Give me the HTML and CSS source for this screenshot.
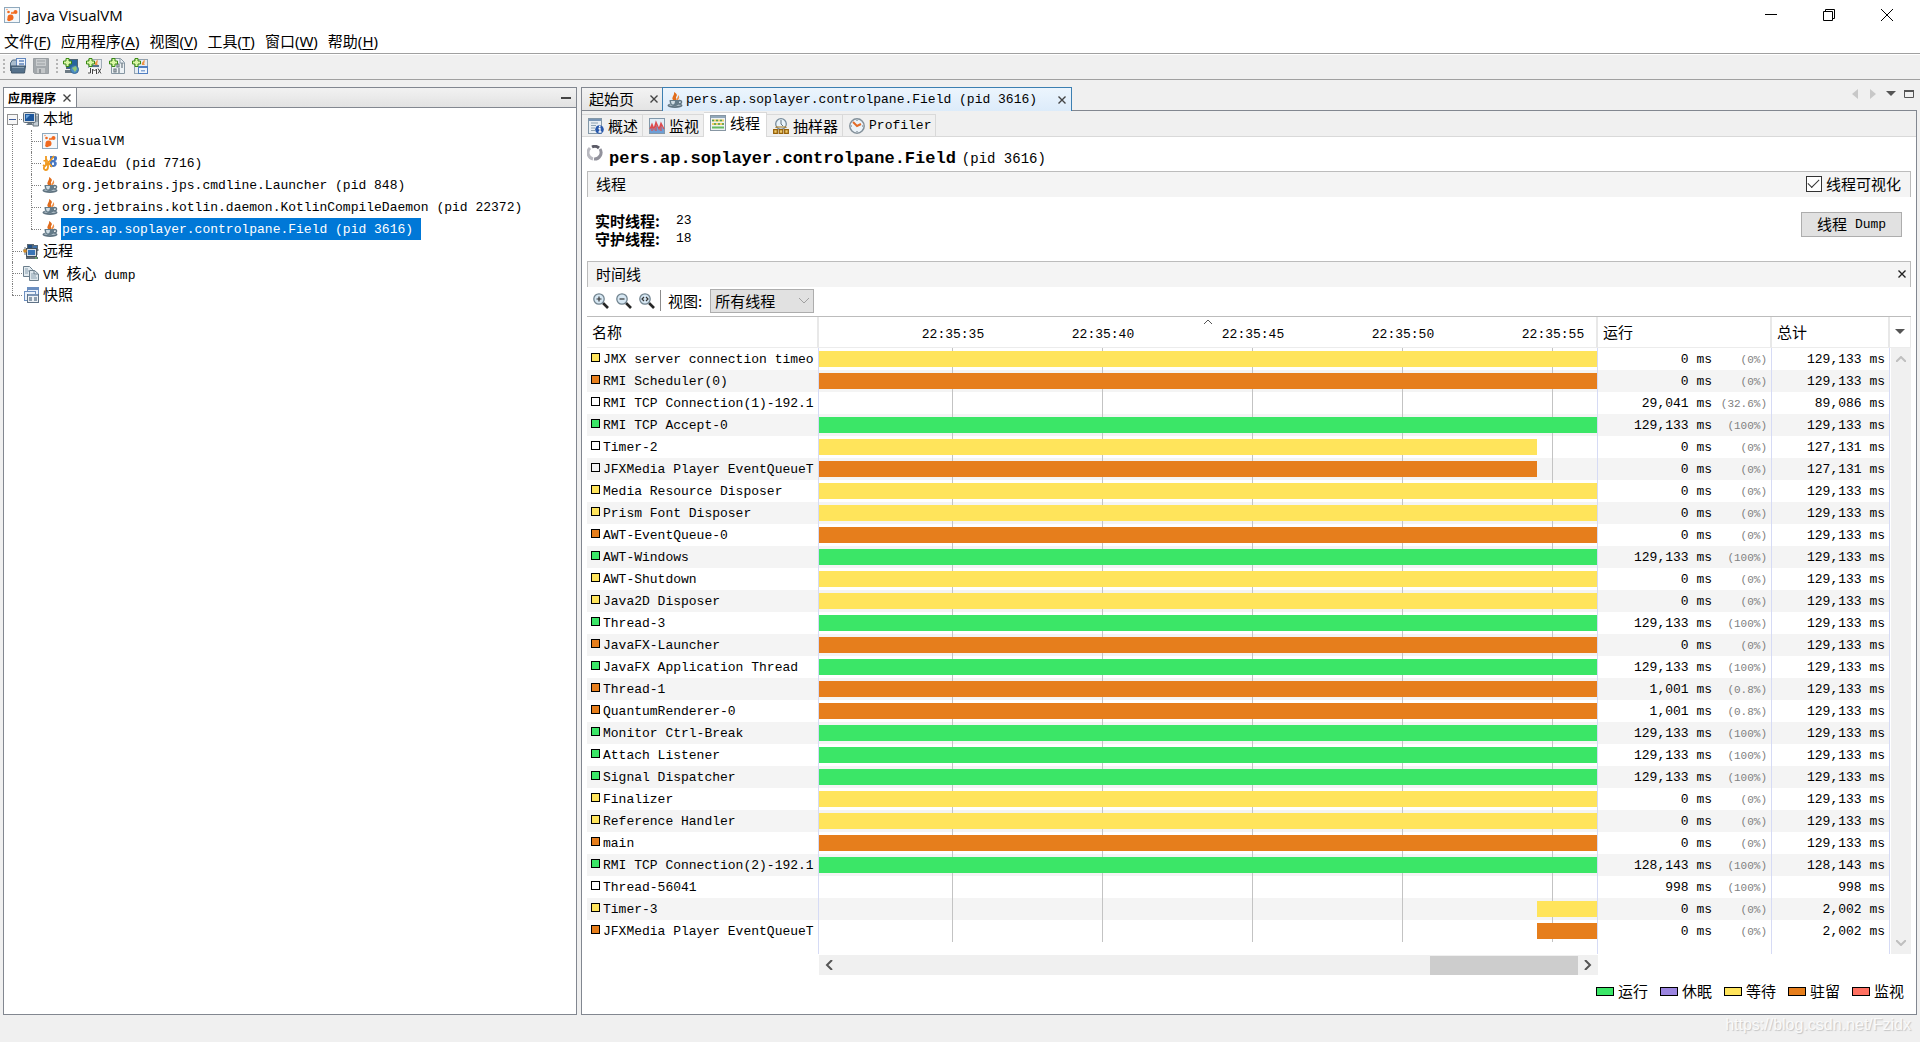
FILE: index.html
```html
<!DOCTYPE html>
<html lang="zh-CN">
<head>
<meta charset="utf-8">
<title>Java VisualVM</title>
<link rel="stylesheet" href="styles.css">
</head>
<body>
<svg class="defs" aria-hidden="true">
  <symbol id="i-vm" viewBox="0 0 16 16"><rect x=".5" y=".5" width="15" height="15" fill="#f4f8fb" stroke="#8fa9bd"/><path d="M9 6.500L11 4.500" stroke="#f06a20" stroke-width="1.500"/><circle cx="6.500" cy="10.500" r="3" fill="#f06a20"/><circle cx="5" cy="12.500" r="1.800" fill="#f06a20"/><circle cx="11.500" cy="5" r="2" fill="#f06a20"/><circle cx="4.500" cy="5" r="1.300" fill="#f06a20"/><circle cx="8" cy="6" r="1.200" fill="#f7853f"/><circle cx="3" cy="2.500" r=".8" fill="#f7a070"/></symbol>
  <symbol id="i-java" viewBox="0 0 16 16"><path d="M7.500 9C2.500 6 8 4 7 0c5 3 2 4 2 5.500S10 8 7.500 9z" fill="#e06c1c"/><path d="M9.500 9c-1-3 2-3 1.500-6 3 3-.5 4 0 6z" fill="#ee9048"/><ellipse cx="8" cy="13.500" rx="7.500" ry="2.400" fill="#5f7380"/><ellipse cx="8" cy="13" rx="6" ry="1.200" fill="#b9c7d0"/><path d="M2.500 8h10c0 4.500-2 6-5 6s-5-2-5-6z" fill="#647b89"/><path d="M4 9h4c0 2.500-1 3.500-2 3.500S4 11.500 4 9z" fill="#cfdce3"/><path d="M12 8.500c3.500-.5 3.500 3.500-.5 3.500" fill="none" stroke="#5f7380" stroke-width="1.400"/></symbol>
  <symbol id="i-idea" viewBox="0 0 16 16"><path d="M8 1h5q2.500 0 2 3-.5 2-2 2 2.500 1 1.500 4-1 2-3 2H8z" fill="#4777c2"/><path d="M10 3h2v2h-2zM10 7.500h2V10h-2z" fill="#eaf1fb"/><path d="M1.500 6l4-1M4 1v8q0 3-3 1M12 1L7 7l-5 5c-1 4 4 4 4 0V7l4 5" fill="none" stroke="#f09a20" stroke-width="1.800"/></symbol>
  <symbol id="i-local" viewBox="0 0 16 16"><path d="M11 3h4.500v12H10z" fill="#c4cdd4" stroke="#68757f"/><path d="M12 6h3M12 8h3M12 10h3" stroke="#7b8790"/><rect x=".5" y="1.500" width="12" height="10" rx="1" fill="#d6dce1" stroke="#5d6b77"/><rect x="2" y="3" width="9" height="7" fill="#1d579d"/><path d="M3 4h4L3 8z" fill="#6aa4dc"/><path d="M5 12h4l1 2H3z" fill="#6d7983"/></symbol>
  <symbol id="i-remote" viewBox="0 0 16 16"><path d="M0 7h16M2 4v8M14 4v8" stroke="#6b7680"/><rect x="4.500" y="1.500" width="6" height="5" fill="#234f83" stroke="#5b6873"/><rect x="9.500" y="2.500" width="5" height="5" fill="#3d72ad" stroke="#5b6873"/><rect x="4.500" y="6.500" width="8" height="6" fill="#3975b7" stroke="#d5dce2"/><rect x="3.500" y="5.500" width="10" height="8" fill="none" stroke="#44515c"/><path d="M3 14h12v2H3z" fill="#606b74"/><circle cx="2" cy="8" r="1.800" fill="#d28b25"/><path d="M12 15h2" stroke="#75d35a"/></symbol>
  <symbol id="i-dump" viewBox="0 0 16 16"><path d="M.5 1.500h6l3 3v7h-9z" fill="#e3ebf0" stroke="#6b7e8c"/><path d="M6.500 5.500h5l4 3.500v6.500h-9z" fill="#dde6ec" stroke="#6b7e8c"/><path d="M2 4h3M2 6h4M2 8h3M8 9h3M8 11h5M8 13h6" stroke="#8ca1b0"/><path d="M11 5v4h4" fill="none" stroke="#6b7e8c"/></symbol>
  <symbol id="i-snap" viewBox="0 0 16 16"><rect x="4.500" y=".5" width="11" height="9" fill="#eaf1fa" stroke="#6c8fc0"/><path d="M4 2h12" stroke="#6c8fc0" stroke-width="2"/><rect x="1.500" y="4.500" width="11" height="9" fill="#eaf1fa" stroke="#6c8fc0"/><rect x="4.500" y="7.500" width="11" height="8" fill="#edf1f5" stroke="#5f7286"/><path d="M5 8h10" stroke="#7b95b5" stroke-width="2"/><path d="M6 11h3M6 13h3M11 11h3M11 13h3" stroke="#6d8396" stroke-width="1.500"/></symbol>
  <symbol id="i-open" viewBox="0 0 16 16"><path d="M.5 13V5l2-3h4v6" fill="#a9bccd" stroke="#506a82"/><rect x="6.500" y=".5" width="9" height="8" fill="#eef3fa" stroke="#6287bd"/><path d="M9 3h5M9 6h5" stroke="#6287bd" stroke-width="1.500"/><path d="M1 8h14.500l-1 7h-13z" fill="#55718b" stroke="#40566a"/><path d="M2 9.500h12" stroke="#89a0b4"/></symbol>
  <symbol id="i-save" viewBox="0 0 16 16"><path d="M.5 .5h15v15h-14l-1-1z" fill="#a3a8ac" stroke="#9a9fa3"/><path d="M3 1h10v7H3z" fill="#c9ccce"/><path d="M4 3h8M4 6h8" stroke="#999ea2"/><path d="M4 10h8v5H4z" fill="#c3c6c8"/><path d="M6 11h2v4H6z" fill="#92979b"/></symbol>
  <symbol id="i-plus" viewBox="0 0 16 16"><path d="M3 .5h3V3h2.500v3H6v2.500H3V6H.5V3H3z" fill="#dcf7a8" stroke="#398b13"/></symbol>
  <symbol id="i-addhost" viewBox="0 0 16 16"><rect x="3.500" y="1.500" width="11" height="9" fill="#28649e" stroke="#526673"/><path d="M2 12h7v3H2z" fill="#6d7b85"/><circle cx="11.500" cy="11.500" r="4" fill="#4d8ec4" stroke="#386a96"/><path d="M9 10l4-2 1 3-2 3z" fill="#91c676"/><use href="#i-plus"/></symbol>
  <symbol id="i-addjmx" viewBox="0 0 16 16"><rect x="2.500" y="1.500" width="13" height="14" fill="#e6ebef" stroke="#a0acb6"/><path d="M9 7c-1-3 2-3 2-6 2 3-1 4 1 6" fill="#f09345"/><path d="M6 8h7" stroke="#58738a" stroke-width="2"/><path d="M2 10h14v6H2z" fill="#f8f8f8"/><path d="M4.500 10v5H2M6.500 16v-5l2 2 2-2v5M12 10.500l3 5M15 10.500l-3 5" fill="none" stroke="#444"/><use href="#i-plus"/></symbol>
  <symbol id="i-addcore" viewBox="0 0 16 16"><path d="M2.500 .5h9l4 4v11h-13z" fill="#edf2f5" stroke="#8696a2"/><path d="M11 1v4h4" fill="none" stroke="#8696a2"/><path d="M8 6h2v3H8zM13 5v5M5 11h2v3H5zM10 10v5" fill="none" stroke="#6b7780" stroke-width="1.200"/><use href="#i-plus"/></symbol>
  <symbol id="i-addsnap" viewBox="0 0 16 16"><rect x="2.500" y="1.500" width="13" height="14" fill="#e6edf3" stroke="#91a3b3"/><path d="M10 7c-1-3 2-3 2-6 2 3-1 4 1 6" fill="#f09345"/><rect x="6.500" y="8.500" width="9" height="7" fill="#eff5fc" stroke="#517fc1"/><path d="M7 9.500h8" stroke="#517fc1"/><path d="M9 12h4v1.500H9z" fill="#86a7d5"/><use href="#i-plus"/></symbol>
  <symbol id="i-overview" viewBox="0 0 16 16"><rect x=".5" y=".5" width="13" height="15" fill="#e9eff4" stroke="#8498a8"/><path d="M1 2h12" stroke="#7795b5" stroke-width="2"/><path d="M3 5h7M3 7.500h5M3 10h4M3 12.500h4" stroke="#8ea3b3"/><circle cx="11.500" cy="11.500" r="4.300" fill="#2858ac"/><path d="M10.500 10.500h1.500v3.500M10.500 14h3M11 8.500h1.500" fill="none" stroke="#fff" stroke-width="1.300"/></symbol>
  <symbol id="i-monitor" viewBox="0 0 16 16"><rect x=".5" y=".5" width="15" height="15" fill="#e1edf7" stroke="#8298aa"/><path d="M1 15v-4l2-3 2 3 3-4 2 4 2-4 3 4v4z" fill="#6d9fd6"/><path d="M1 11l2-5 2 5 2-7 3 7 2-6 3 6M3 7v6M7 6v7M12 7v6" fill="none" stroke="#dd4a4e" stroke-width="1.200"/></symbol>
  <symbol id="i-threads" viewBox="0 0 16 16"><rect x=".5" y=".5" width="15" height="15" fill="#eef2f5" stroke="#8796a3"/><path d="M1 2h14" stroke="#92a8ba" stroke-width="2"/><path d="M2 5.500h12" stroke="#f0ce61" stroke-width="2"/><path d="M2 9h12" stroke="#f0ce61" stroke-width="2"/><path d="M2 12.500h12" stroke="#66bb61" stroke-width="2"/><path d="M2 5.500h2M6 5.500h2M10 5.500h2M4 9h2M8 9h2M12 9h2" stroke="#4c9d55" stroke-width="1.500"/></symbol>
  <symbol id="i-sampler" viewBox="0 0 16 16"><circle cx="8" cy="6" r="5.300" fill="#e9f3fa" stroke="#788c9c" stroke-width="1.300"/><path d="M8 2v4l2 2" fill="none" stroke="#617380"/><path d="M3 10v-1h10v1" fill="none" stroke="#a77519"/><path d="M.7 11.700h3.600v3.600H.7zM6.200 11.700h3.600v3.600H6.200zM11.700 11.700h3.600v3.600h-3.600z" fill="#f0ca67" stroke="#956008" stroke-width="1.300"/></symbol>
  <symbol id="i-clock" viewBox="0 0 16 16"><circle cx="8" cy="8" r="7.200" fill="#ebf3f9" stroke="#83909a" stroke-width="1.500"/><path d="M8 2v1M8 13v1M2 8h1M13 8h1" stroke="#65737e"/><path d="M4 4l4 4 4-2" fill="none" stroke="#e36b27" stroke-width="2"/></symbol>
  <symbol id="i-lens" viewBox="0 0 16 16"><path d="M10 10l5 5" stroke="#262626" stroke-width="2.600"/><circle cx="6" cy="6" r="5.200" fill="#d6e7f3" stroke="#71838f" stroke-width="1.300"/></symbol>
  <symbol id="i-x" viewBox="0 0 10 10"><path d="M1.500 1.500l7 7M8.500 1.500l-7 7" stroke="currentColor" stroke-width="1.400"/></symbol>
</svg>

<header class="titlebar">
  <svg class="icon"><use href="#i-vm"/></svg>
  <h1 class="app-title">Java VisualVM</h1>
  <div class="window-buttons">
    <button aria-label="最小化"><svg width="12" height="12"><path d="M0 5.500h12" stroke="#000"/></svg></button>
    <button aria-label="还原"><svg width="12" height="12" fill="none" stroke="#000"><path d="M.5 2.500h9v9h-9zM2.500 2V.5h9v9H10"/></svg></button>
    <button aria-label="关闭"><svg width="12" height="12"><path d="M0 0l12 12M12 0L0 12" stroke="#000"/></svg></button>
  </div>
</header>
<nav class="menubar">
  <button>文件(<u>F</u>)</button><button>应用程序(<u>A</u>)</button><button>视图(<u>V</u>)</button><button>工具(<u>T</u>)</button><button>窗口(<u>W</u>)</button><button>帮助(<u>H</u>)</button>
</nav>
<div class="toolbar">
  <i class="grip"></i>
  <button aria-label="装入"><svg class="icon"><use href="#i-open"/></svg></button>
  <button aria-label="另存为" disabled><svg class="icon"><use href="#i-save"/></svg></button>
  <i class="grip"></i>
  <button aria-label="添加远程主机"><svg class="icon"><use href="#i-addhost"/></svg></button>
  <button aria-label="添加 JMX 连接"><svg class="icon"><use href="#i-addjmx"/></svg></button>
  <button aria-label="添加 VM 核心 dump"><svg class="icon"><use href="#i-addcore"/></svg></button>
  <button aria-label="添加快照"><svg class="icon"><use href="#i-addsnap"/></svg></button>
</div>

<main class="workspace">
  <aside class="explorer">
    <div class="explorer-head">
      <div class="explorer-tab">应用程序 <button aria-label="关闭"><svg class="x"><use href="#i-x"/></svg></button></div>
      <button class="minimize" aria-label="最小化"></button>
    </div>
    <ul class="tree">
      <li><button class="expander" aria-label="折叠"></button>
        <div class="node"><svg class="icon"><use href="#i-local"/></svg><span class="label cjk">本地</span></div>
        <ul>
          <li><div class="node"><svg class="icon"><use href="#i-vm"/></svg><span class="label">VisualVM</span></div></li>
          <li><div class="node"><svg class="icon"><use href="#i-idea"/></svg><span class="label">IdeaEdu (pid 7716)</span></div></li>
          <li><div class="node"><svg class="icon"><use href="#i-java"/></svg><span class="label">org.jetbrains.jps.cmdline.Launcher (pid 848)</span></div></li>
          <li><div class="node"><svg class="icon"><use href="#i-java"/></svg><span class="label">org.jetbrains.kotlin.daemon.KotlinCompileDaemon (pid 22372)</span></div></li>
          <li><div class="node"><svg class="icon"><use href="#i-java"/></svg><span class="label selected">pers.ap.soplayer.controlpane.Field (pid 3616)</span></div></li>
        </ul>
      </li>
      <li><div class="node"><svg class="icon"><use href="#i-remote"/></svg><span class="label cjk">远程</span></div></li>
      <li><div class="node"><svg class="icon"><use href="#i-dump"/></svg><span class="label">VM <span class="cjk">核心</span> dump</span></div></li>
      <li><div class="node"><svg class="icon"><use href="#i-snap"/></svg><span class="label cjk">快照</span></div></li>
    </ul>
  </aside>

  <section class="editor">
    <div class="doc-tabs">
      <div class="doc-tab start"><span class="cjk">起始页</span><button aria-label="关闭"><svg class="x"><use href="#i-x"/></svg></button></div>
      <div class="doc-tab active"><svg class="icon"><use href="#i-java"/></svg><span>pers.ap.soplayer.controlpane.Field (pid 3616)</span><button aria-label="关闭"><svg class="x"><use href="#i-x"/></svg></button></div>
      <div class="doc-controls">
        <button aria-label="向左滚动" disabled><svg width="10" height="10"><path d="M8 0v10L2 5z" fill="#c8c8c8"/></svg></button>
        <button aria-label="向右滚动" disabled><svg width="10" height="10"><path d="M2 0v10l6-5z" fill="#c8c8c8"/></svg></button>
        <button aria-label="文档列表"><svg width="10" height="10"><path d="M0 2h10L5 7z" fill="#555"/></svg></button>
        <button aria-label="最大化"><svg width="10" height="10"><path d="M.5 1.500h9v7h-9z" fill="none" stroke="#555"/><path d="M0 2h10" stroke="#555" stroke-width="2"/></svg></button>
      </div>
    </div>
    <div class="doc">
      <div class="view-tabs">
        <button class="cjk"><svg class="icon"><use href="#i-overview"/></svg>概述</button>
        <button class="cjk"><svg class="icon"><use href="#i-monitor"/></svg>监视</button>
        <button class="cjk current"><svg class="icon"><use href="#i-threads"/></svg>线程</button>
        <button class="cjk"><svg class="icon"><use href="#i-sampler"/></svg>抽样器</button>
        <button><svg class="icon"><use href="#i-clock"/></svg>Profiler</button>
      </div>
      <div class="view">
        <h2 class="view-title"><svg class="icon spinner" viewBox="0 0 16 16" fill="none" stroke-width="3"><path d="M3 3a6.500 6.500 0 0 0 3 11" stroke="#b9b9c0"/><path d="M5 2a6.500 6.500 0 0 1 7 1" stroke="#5c5c68"/><path d="M13 4a6.500 6.500 0 0 1-6 10" stroke="#92929c"/></svg><b>pers.ap.soplayer.controlpane.Field</b> <span>(pid 3616)</span></h2>

        <div class="section-head cjk"><span>线程</span><label class="check"><input type="checkbox" checked>线程可视化</label></div>
        <div class="summary">
          <dl class="counts">
            <dt>实时线程:</dt><dd>23</dd>
            <dt>守护线程:</dt><dd>18</dd>
          </dl>
          <button class="dump"><span class="cjk">线程</span> Dump</button>
        </div>

        <div class="section-head cjk"><span>时间线</span><button class="close-section" aria-label="关闭"><svg class="x bold"><use href="#i-x"/></svg></button></div>
        <div class="timeline-tools">
          <button aria-label="放大"><svg class="icon"><use href="#i-lens"/><path d="M3.500 6h5M6 3.500v5" stroke="#333" stroke-width="1.200"/></svg></button>
          <button aria-label="缩小"><svg class="icon"><use href="#i-lens"/><path d="M3.500 6h5" stroke="#333" stroke-width="1.200"/></svg></button>
          <button aria-label="适合窗口"><svg class="icon"><use href="#i-lens"/><path d="M5 4L3 6l2 2M7 4l2 2-2 2" fill="none" stroke="#333" stroke-width="1.200"/></svg></button>
          <i class="rule"></i>
          <label class="cjk" for="filter">视图:</label>
          <span class="select"><select id="filter" class="cjk"><option>所有线程</option></select><svg width="10" height="6"><path d="M0 0l5 5 5-5" fill="none" stroke="#a0a0a0"/></svg></span>
        </div>

        <div class="grid-wrap">
          <table class="threads">
            <colgroup><col class="c-name"><col><col class="c-run"><col class="c-total"></colgroup>
            <thead><tr>
              <th class="cjk">名称</th>
              <th class="axis"><svg class="sort" width="10" height="6"><path d="M1 5l4-4 4 4" fill="none" stroke="#555"/></svg><div class="ticks"><span>22:35:35</span><span>22:35:40</span><span>22:35:45</span><span>22:35:50</span><span>22:35:55</span></div></th>
              <th class="cjk">运行</th>
              <th class="cjk">总计</th>
            </tr></thead>
            <tbody>
              <tr><td class="wait">JMX server connection timeo</td><td><i class="bar wait"></i></td><td>0 ms<small>(0%)</small></td><td>129,133 ms</td></tr>
              <tr><td class="park">RMI Scheduler(0)</td><td><i class="bar park"></i></td><td>0 ms<small>(0%)</small></td><td>129,133 ms</td></tr>
              <tr><td class="done">RMI TCP Connection(1)-192.1</td><td></td><td>29,041 ms<small>(32.6%)</small></td><td>89,086 ms</td></tr>
              <tr><td class="run">RMI TCP Accept-0</td><td><i class="bar run"></i></td><td>129,133 ms<small>(100%)</small></td><td>129,133 ms</td></tr>
              <tr><td class="done">Timer-2</td><td><i class="bar wait" style="width:92.3%"></i></td><td>0 ms<small>(0%)</small></td><td>127,131 ms</td></tr>
              <tr><td class="done">JFXMedia Player EventQueueT</td><td><i class="bar park" style="width:92.3%"></i></td><td>0 ms<small>(0%)</small></td><td>127,131 ms</td></tr>
              <tr><td class="wait">Media Resource Disposer</td><td><i class="bar wait"></i></td><td>0 ms<small>(0%)</small></td><td>129,133 ms</td></tr>
              <tr><td class="wait">Prism Font Disposer</td><td><i class="bar wait"></i></td><td>0 ms<small>(0%)</small></td><td>129,133 ms</td></tr>
              <tr><td class="park">AWT-EventQueue-0</td><td><i class="bar park"></i></td><td>0 ms<small>(0%)</small></td><td>129,133 ms</td></tr>
              <tr><td class="run">AWT-Windows</td><td><i class="bar run"></i></td><td>129,133 ms<small>(100%)</small></td><td>129,133 ms</td></tr>
              <tr><td class="wait">AWT-Shutdown</td><td><i class="bar wait"></i></td><td>0 ms<small>(0%)</small></td><td>129,133 ms</td></tr>
              <tr><td class="wait">Java2D Disposer</td><td><i class="bar wait"></i></td><td>0 ms<small>(0%)</small></td><td>129,133 ms</td></tr>
              <tr><td class="run">Thread-3</td><td><i class="bar run"></i></td><td>129,133 ms<small>(100%)</small></td><td>129,133 ms</td></tr>
              <tr><td class="park">JavaFX-Launcher</td><td><i class="bar park"></i></td><td>0 ms<small>(0%)</small></td><td>129,133 ms</td></tr>
              <tr><td class="run">JavaFX Application Thread</td><td><i class="bar run"></i></td><td>129,133 ms<small>(100%)</small></td><td>129,133 ms</td></tr>
              <tr><td class="park">Thread-1</td><td><i class="bar park"></i></td><td>1,001 ms<small>(0.8%)</small></td><td>129,133 ms</td></tr>
              <tr><td class="park">QuantumRenderer-0</td><td><i class="bar park"></i></td><td>1,001 ms<small>(0.8%)</small></td><td>129,133 ms</td></tr>
              <tr><td class="run">Monitor Ctrl-Break</td><td><i class="bar run"></i></td><td>129,133 ms<small>(100%)</small></td><td>129,133 ms</td></tr>
              <tr><td class="run">Attach Listener</td><td><i class="bar run"></i></td><td>129,133 ms<small>(100%)</small></td><td>129,133 ms</td></tr>
              <tr><td class="run">Signal Dispatcher</td><td><i class="bar run"></i></td><td>129,133 ms<small>(100%)</small></td><td>129,133 ms</td></tr>
              <tr><td class="wait">Finalizer</td><td><i class="bar wait"></i></td><td>0 ms<small>(0%)</small></td><td>129,133 ms</td></tr>
              <tr><td class="wait">Reference Handler</td><td><i class="bar wait"></i></td><td>0 ms<small>(0%)</small></td><td>129,133 ms</td></tr>
              <tr><td class="park">main</td><td><i class="bar park"></i></td><td>0 ms<small>(0%)</small></td><td>129,133 ms</td></tr>
              <tr><td class="run">RMI TCP Connection(2)-192.1</td><td><i class="bar run"></i></td><td>128,143 ms<small>(100%)</small></td><td>128,143 ms</td></tr>
              <tr><td class="done">Thread-56041</td><td></td><td>998 ms<small>(100%)</small></td><td>998 ms</td></tr>
              <tr><td class="wait">Timer-3</td><td><i class="bar wait" style="width:7.7%"></i></td><td>0 ms<small>(0%)</small></td><td>2,002 ms</td></tr>
              <tr><td class="park">JFXMedia Player EventQueueT</td><td><i class="bar park" style="width:7.7%"></i></td><td>0 ms<small>(0%)</small></td><td>2,002 ms</td></tr>
            </tbody>
            <tfoot><tr><td></td><td></td><td></td><td></td></tr></tfoot>
          </table>
          <div class="side">
            <button class="columns" aria-label="选择列"><svg width="10" height="6"><path d="M0 0h10L5 5z" fill="#555"/></svg></button>
            <div class="vscroll">
              <button aria-label="向上" disabled><svg width="10" height="6"><path d="M0 6l5-5 5 5" fill="none" stroke="#bfbfbf" stroke-width="2"/></svg></button>
              <button aria-label="向下" disabled><svg width="10" height="6"><path d="M0 0l5 5 5-5" fill="none" stroke="#bfbfbf" stroke-width="2"/></svg></button>
            </div>
          </div>
        </div>
        <div class="hscroll">
          <button aria-label="向左"><svg width="8" height="10"><path d="M7 0L2 5l5 5" fill="none" stroke="#555" stroke-width="2"/></svg></button>
          <div class="thumb"></div>
          <button aria-label="向右"><svg width="8" height="10"><path d="M1 0l5 5-5 5" fill="none" stroke="#555" stroke-width="2"/></svg></button>
        </div>
        <ul class="legend cjk">
          <li class="run">运行</li><li class="sleep">休眠</li><li class="wait">等待</li><li class="park">驻留</li><li class="block">监视</li>
        </ul>
      </div>
    </div>
  </section>
</main>
<footer class="statusbar"><span>https://blog.csdn.net/Fzidx</span></footer>
</body>
</html>
```
FILE: styles.css
```css
:root {
  --mono: "Liberation Mono", "Noto Sans CJK SC", monospace;
  --ui: "Noto Sans", "Noto Sans CJK SC", sans-serif;
  --cjk: "Noto Sans CJK SC", sans-serif;
  --chrome: #f0f0f0;
  --edge: #828790;
  --run: #3be667;
  --sleep: #9b85e0;
  --wait: #ffe45b;
  --park: #e67e1c;
  --block: #ff7061;
}

*, ::before, ::after { box-sizing: border-box; }

body {
  margin: 0;
  min-height: 100vh;
  display: flex;
  flex-direction: column;
  background: var(--chrome);
  font: 13px/20px var(--mono);
  color: #000;
}

button {
  margin: 0;
  padding: 0;
  border: 0;
  background: none;
  font: inherit;
  color: inherit;
  display: flex;
  align-items: center;
  justify-content: center;
}

ul, dl, dd, h1, h2 { margin: 0; padding: 0; }
ul { list-style: none; }
svg { display: block; flex: none; }

.defs { position: absolute; width: 0; height: 0; }
.icon { width: 16px; height: 16px; }
.x { width: 10px; height: 10px; color: #444; }
.x.bold { color: #222; }
.cjk { font-family: var(--cjk); font-size: 15px; }

/* window frame */
.titlebar {
  display: flex;
  align-items: center;
  height: 29px;
  padding: 0 17px 0 4px;
  gap: 7px;
  background: #fff;
}
.app-title { font: 15px/20px "Open Sans", sans-serif; }
.window-buttons { display: flex; gap: 46px; margin-left: auto; padding-right: 10px; }

.menubar {
  display: flex;
  align-items: center;
  gap: 10px;
  height: 25px;
  padding-left: 4px;
  background: #fff;
  border-bottom: 1px solid #a0a0a0;
  font: 15px/20px var(--ui);
}
.menubar u { text-underline-offset: 2px; }

.toolbar {
  display: flex;
  align-items: center;
  gap: 7px;
  height: 26px;
  padding: 0 3px 2px;
  border-top: 1px solid #fff;
  border-bottom: 1px solid #a0a0a0;
}
.grip { width: 2px; height: 15px; margin-right: -2px; background: repeating-linear-gradient(#b5b5b5 0 2px, transparent 2px 4px); }

.workspace {
  flex: 1;
  display: grid;
  grid-template-columns: minmax(0, 574fr) minmax(0, 1336fr);
  gap: 4px;
  padding: 7px 3px 0;
}

/* explorer */
.explorer { background: #fff; border: 1px solid var(--edge); }
.explorer-head {
  display: flex;
  justify-content: space-between;
  align-items: center;
  height: 20px;
  padding-right: 5px;
  border-bottom: 1px solid var(--edge);
  background: linear-gradient(#f2f2f2, #e2e2e2);
}
.explorer-tab {
  display: flex;
  align-items: center;
  gap: 6px;
  height: 100%;
  padding: 0 4px;
  background: #fff;
  border-right: 1px solid var(--edge);
  font: bold 12px/19px var(--cjk);
}
.minimize { width: 10px; height: 2px; background: #444; }

.tree li { position: relative; padding-left: 19px; }
.tree li::before {
  content: "";
  position: absolute;
  left: 8px;
  top: 0;
  height: 100%;
  border-left: 1px dotted #808080;
}
.tree li:last-child::before { height: 11px; }
.tree li::after {
  content: "";
  position: absolute;
  left: 8px;
  top: 11px;
  width: 10px;
  border-top: 1px dotted #808080;
}
.tree > li:first-child::before { top: 17px; height: auto; bottom: 0; }
.expander {
  position: absolute;
  z-index: 1;
  left: 3px;
  top: 6px;
  width: 11px;
  height: 11px;
  border: 1px solid #919191;
  background: linear-gradient(#3e5d9b, #3e5d9b) center / 7px 1px no-repeat #f7f7f7;
}
.node { display: flex; align-items: center; gap: 3px; height: 22px; white-space: nowrap; }
.label { height: 22px; padding: 1px 8px 0 1px; line-height: 22px; }
.label.cjk { padding-top: 0; line-height: 20px; }
.label .cjk { line-height: 20px; }
.selected { background: #0078d7; color: #fff; }

/* editor */
.editor { display: flex; flex-direction: column; }
.doc-tabs { display: flex; height: 24px; box-shadow: inset 0 -1px var(--edge); }
.doc-tab { display: flex; align-items: center; padding: 0 4px; gap: 3px; }
.doc-tab button { margin-left: auto; }
.doc-tab.start {
  width: 81px;
  padding-left: 7px;
  padding-right: 3px;
  border: 1px solid var(--edge);
  border-right: 0;
  background: linear-gradient(#f3f3f3, #e4e4e4);
}
.doc-tab.active {
  width: 410px;
  border: 1px solid #3c7fb1;
  border-bottom: 0;
  background: linear-gradient(#ecf5fd, #dcebfa);
}
.doc-controls { display: flex; gap: 8px; margin-left: auto; padding: 0 3px 10px 0; align-items: center; }

.doc { flex: 1; background: #fff; border: 1px solid var(--edge); border-top: 0; }
.view-tabs {
  display: flex;
  align-items: flex-end;
  height: 26px;
  background: var(--chrome);
  box-shadow: inset 0 -1px #d9d9d9;
}
.view-tabs button {
  height: 23px;
  padding: 0 4px 0 6px;
  gap: 4px;
  border: 1px solid #d9d9d9;
  border-left: 0;
}
.view-tabs .current { height: 25px; padding: 0 6px 4px; background: #fff; border-bottom: 0; }

.view { padding: 0 5px; }
.view-title { display: flex; align-items: center; height: 34px; font: 14px/20px var(--mono); padding-top: 9px; }
.view-title b { font-size: 17px; margin: 0 6px 0 6px; }
.spinner { margin-bottom: 11px; }

.section-head {
  display: flex;
  align-items: center;
  justify-content: space-between;
  height: 26px;
  padding: 0 9px 2px 8px;
  border: 1px solid #bcbcbc;
  border-bottom: 0;
  background: #f4f4f4;
}
.check { display: flex; align-items: center; gap: 4px; }
.check input {
  appearance: none;
  width: 16px;
  height: 16px;
  margin: 0;
  border: 1px solid #333;
  background: #fff;
  display: grid;
  place-items: center;
}
.check input:checked::before {
  content: "";
  width: 11px;
  height: 6px;
  margin-bottom: 3px;
  border: solid #333;
  border-width: 0 0 1px 1px;
  transform: rotate(-45deg);
}
.close-section { margin-right: -6px; }

.summary { display: flex; justify-content: space-between; align-items: flex-start; height: 64px; padding: 15px 9px 0 8px; }
.counts { display: grid; grid-template-columns: auto auto; align-items: end; column-gap: 16px; line-height: 18px; }
.counts dt { font: bold 15px/18px var(--cjk); }
.dump { width: 101px; height: 25px; gap: 8px; border: 1px solid #adadad; background: #e1e1e1; }
.dump .cjk { padding-bottom: 2px; }

.timeline-tools { display: flex; align-items: center; gap: 7px; height: 29px; padding: 0 0 2px 6px; }
.rule { width: 1px; height: 21px; margin-left: -2px; background: #8c8c8c; }
.select { display: grid; align-items: center; margin-left: 1px; }
.select > * { grid-area: 1 / 1; }
.select svg { justify-self: end; margin-right: 5px; }
.select select {
  appearance: none;
  width: 104px;
  height: 24px;
  padding: 0 4px 1px;
  border: 1px solid #adadad;
  border-radius: 0;
  background: #e1e1e1;
  color: #000;
}

/* thread table */
.grid-wrap { display: flex; border-top: 1px solid #bcbcbc; }
.threads { flex: 1; width: 0; table-layout: fixed; border-spacing: 0; border-collapse: separate; }
.c-name { width: 232px; }
.c-run { width: 174px; }
.c-total { width: 118px; }

.threads th {
  height: 31px;
  padding: 0 5px;
  border-right: 2px solid #e8e8e8;
  border-bottom: 1px solid #ececec;
  font-weight: normal;
  text-align: left;
}
.threads th.axis { position: relative; padding: 5px 0 0; }
.sort { position: absolute; top: 2px; left: 50%; margin-left: -5px; }
.ticks { display: flex; padding-left: 59px; overflow: hidden; }
.ticks span { flex: 0 0 150px; text-align: center; }

.threads td {
  height: 22px;
  padding: 2px 4px 0 0;
  border-right: 1px solid #d6dbf5;
  line-height: 20px;
  text-align: right;
  white-space: nowrap;
  overflow: hidden;
}
.threads tbody tr:nth-child(even) { background: #f4f4f4; }
.threads td:first-child { padding-right: 0; text-align: left; }
.threads td:nth-child(2) { padding: 0; }
.threads tbody td:nth-child(2) {
  background: repeating-linear-gradient(90deg, #c3c3c3 0 1px, transparent 1px 150px) 133px 0 / 150px 100%;
}
.threads tbody td:first-child::before {
  content: "";
  display: inline-block;
  width: 9px;
  height: 9px;
  margin: 0 3px 1px 4px;
  border: 1px solid #000;
}
.threads small { display: inline-block; width: 55px; font-size: 11px; color: #808080; }
.threads tfoot td { height: 12px; padding: 0; }

.bar { display: block; width: 100%; height: 16px; }
.done + td .bar { margin-right: auto; }
td:not(.done) + td .bar { margin-left: auto; }

td.run::before, .bar.run, .legend .run::before { background: var(--run); }
td.wait::before, .bar.wait, .legend .wait::before { background: var(--wait); }
td.park::before, .bar.park, .legend .park::before { background: var(--park); }
.legend .sleep::before { background: var(--sleep); }
.legend .block::before { background: var(--block); }

.side { display: flex; flex-direction: column; width: 21px; }
.columns { height: 31px; border-right: 1px solid #e8e8e8; border-bottom: 1px solid #ececec; }
.vscroll {
  flex: 1;
  display: flex;
  flex-direction: column;
  justify-content: space-between;
  margin-left: 1px;
  padding: 8px 0;
  background: var(--chrome);
}

.hscroll {
  display: flex;
  align-items: center;
  justify-content: flex-end;
  height: 20px;
  margin: 1px 313px 0 232px;
  background: var(--chrome);
}
.hscroll button { width: 20px; height: 20px; }
.hscroll button:first-child { margin-right: auto; }
.thumb { width: 19%; height: 19px; background: #cdcdcd; }

.legend { display: flex; justify-content: flex-end; gap: 12px; padding: 6px 7px 0 0; }
.legend li { display: flex; align-items: center; gap: 4px; }
.legend li::before { content: ""; width: 18px; height: 9px; border: 1px solid #000; }

.statusbar {
  display: flex;
  justify-content: flex-end;
  height: 27px;
  padding-right: 9px;
  font: 16px/20px "Liberation Sans", sans-serif;
  color: #fafafa;
  text-shadow: 1px 1px 1px #c4c4c4;
}
```
